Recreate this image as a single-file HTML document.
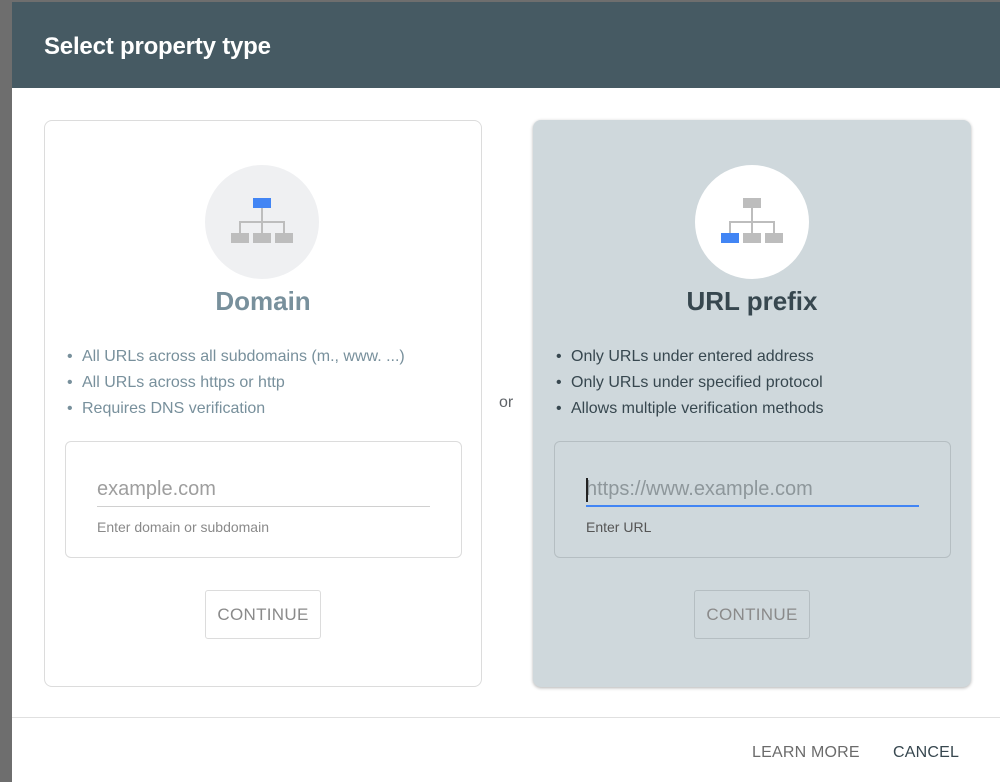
<!DOCTYPE html>
<html><head><style>
*{margin:0;padding:0;box-sizing:border-box}
body{width:1000px;height:782px;overflow:hidden;background:#fff;font-family:"Liberation Sans",sans-serif;position:relative}
.abs{position:absolute}
.card{position:absolute;top:120px;width:438px;height:567px;border-radius:8px}
.inner{position:absolute;left:0;top:0;width:438px;height:567px}
.circle{position:absolute;left:161px;top:45px;width:114px;height:114px;border-radius:50%}
.title{position:absolute;left:0;width:100%;top:166px;text-align:center;font-size:26px;font-weight:bold}
ul{position:absolute;left:38px;top:224px;list-style:none;font-size:16px;line-height:26px}
ul li:before{content:"•";display:inline-block;width:15px;margin-left:-15px}
.box{position:absolute;left:21px;top:321px;width:397px;height:117px;border-radius:6px}
.ph{position:absolute;left:31px;top:36px;font-size:20px;color:#9e9e9e}
.line{position:absolute;left:31px;top:64px;width:333px}
.help{position:absolute;left:31px;top:77px;font-size:14px}
.btn{position:absolute;left:161px;top:470px;width:116px;height:49px;border-radius:3px;font-size:17px;text-align:center;line-height:47px;color:#8a8a8a;letter-spacing:.3px}
</style></head><body>
<div class="abs" style="left:0;top:0;width:12px;height:782px;background:#6e6e6e"></div>
<div class="abs" style="left:0;top:0;width:1000px;height:2px;background:#6e6e6e"></div>
<div class="abs" style="left:12px;top:2px;width:988px;height:86px;background:#465a63"></div>
<div class="abs" style="left:44px;top:33px;font-size:24px;color:#fff;font-weight:bold;letter-spacing:-.2px">Select property type</div>

<div class="card" style="left:44px;border:1px solid #dcdcdc;background:#fff">
<div class="inner" style="left:-1px;top:-1px">
 <div class="circle" style="background:#eff0f2"></div>
 <svg class="abs" style="left:187px;top:78px" width="64" height="48" viewBox="0 0 64 48">
  <rect x="22" y="0" width="18" height="10" fill="#4285f4"/>
  <path d="M31 10V35M9 35V24H53V35" stroke="#bdbdbd" stroke-width="2" fill="none"/>
  <rect x="0" y="35" width="18" height="10" fill="#bdbdbd"/><rect x="22" y="35" width="18" height="10" fill="#bdbdbd"/><rect x="44" y="35" width="18" height="10" fill="#bdbdbd"/>
 </svg>
 <div class="title" style="color:#78909c">Domain</div>
 <ul style="color:#78909c"><li>All URLs across all subdomains (m., www. ...)</li><li>All URLs across https or http</li><li>Requires DNS verification</li></ul>
 <div class="box" style="border:1px solid #dcdcdc">
  <div class="ph">example.com</div>
  <div class="line" style="border-top:1px solid #d0d0d0"></div>
  <div class="help" style="color:#8a8a8a">Enter domain or subdomain</div>
 </div>
 <div class="btn" style="border:1px solid #dcdcdc">CONTINUE</div>
</div>
</div>

<div class="abs" style="left:499px;top:394px;font-size:16px;color:#5f6368">or</div>

<div class="card" style="left:533px;background:#cfd8dc;box-shadow:0 1px 3px rgba(0,0,0,.3)">
 <div class="circle" style="background:#fff;left:162px"></div>
 <svg class="abs" style="left:188px;top:78px" width="64" height="48" viewBox="0 0 64 48">
  <rect x="22" y="0" width="18" height="10" fill="#bdbdbd"/>
  <path d="M31 10V35M9 35V24H53V35" stroke="#bdbdbd" stroke-width="2" fill="none"/>
  <rect x="0" y="35" width="18" height="10" fill="#4285f4"/><rect x="22" y="35" width="18" height="10" fill="#bdbdbd"/><rect x="44" y="35" width="18" height="10" fill="#bdbdbd"/>
 </svg>
 <div class="title" style="color:#37474f">URL prefix</div>
 <ul style="color:#37474f"><li>Only URLs under entered address</li><li>Only URLs under specified protocol</li><li>Allows multiple verification methods</li></ul>
 <div class="box" style="border:1px solid #b5bec2">
  <div class="ph" style="color:#8e979b">https://www.example.com</div>
  <div class="abs" style="left:31px;top:36px;width:2px;height:24px;background:#222"></div>
  <div class="line" style="border-top:2px solid #4285f4;top:63px"></div>
  <div class="help" style="color:#555">Enter URL</div>
 </div>
 <div class="btn" style="border:1px solid #b5bec2">CONTINUE</div>
</div>

<div class="abs" style="left:12px;top:717px;width:988px;height:1px;background:#e0e0e0"></div>
<div class="abs" style="left:752px;top:744px;font-size:16px;color:#6b6b6b;letter-spacing:.2px">LEARN MORE</div>
<div class="abs" style="left:893px;top:744px;font-size:16px;color:#37474f;letter-spacing:.2px">CANCEL</div>
</body></html>
